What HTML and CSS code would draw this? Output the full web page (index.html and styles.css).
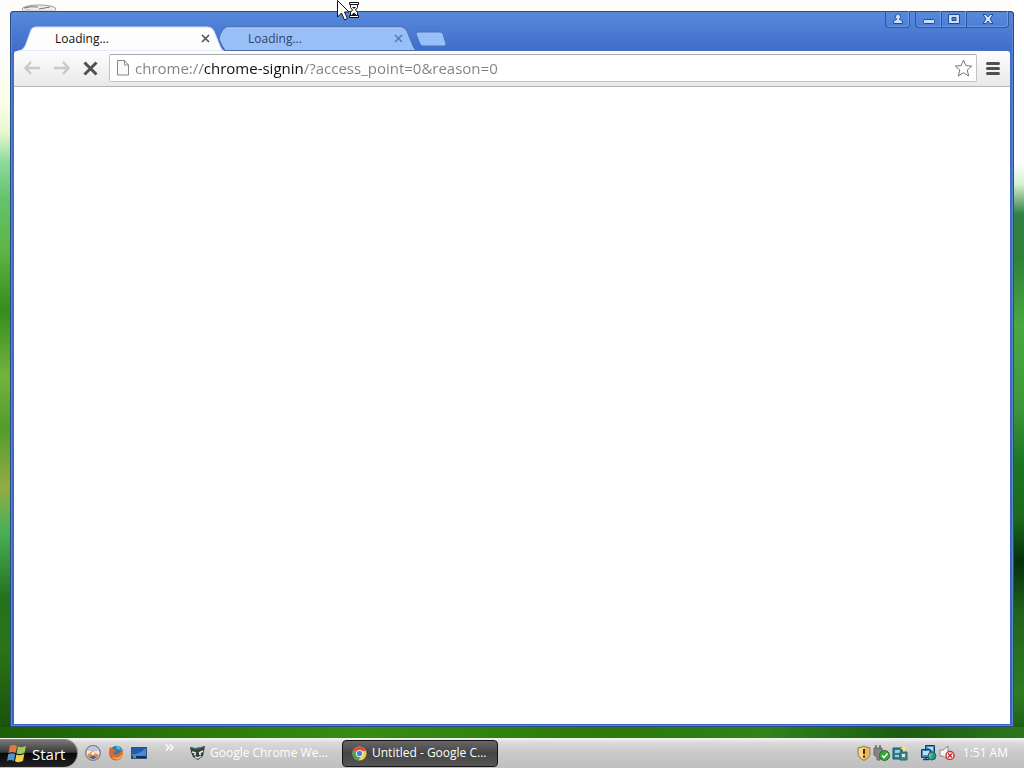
FILE: index.html
```html
<!DOCTYPE html>
<html lang="en">
<head>
<meta charset="utf-8">
<title>Loading...</title>
<link rel="stylesheet" href="styles.css">
</head>
<body>
<main class="desktop">
  <svg class="recycle-bin" width="36" height="14" viewBox="0 0 36 14" aria-hidden="true">
    <ellipse cx="18" cy="5" rx="17" ry="4" fill="#eee" stroke="#999"/>
    <path d="M3 4q8-2 14-1M18 5l11-2M5 6l14 1" stroke="#777" fill="none"/>
    <path d="M1 6l2 8h30l2-8" fill="#ddd"/>
  </svg>
  <section class="window">
    <header class="titlebar">
      <nav class="tabs">
        <button class="tab active" type="button">
          <svg class="tab-shape" viewBox="0 0 206 25" preserveAspectRatio="none" aria-hidden="true"><path d="M0 25C5 24 6 22 8 18L13 4Q14 1 18 1H190Q194 1 196 5L202 20Q204 25 206 25Z" fill="#fdfdfd" stroke="#c9d9f4"/></svg>
          <span class="tab-title">Loading...</span>
          <svg width="9" height="9" viewBox="0 0 9 9" aria-hidden="true"><path d="M1 1l7 7M8 1L1 8" stroke="#555" stroke-width="1.7"/></svg>
        </button>
        <button class="tab" type="button">
          <svg class="tab-shape" viewBox="0 0 206 25" preserveAspectRatio="none" aria-hidden="true"><path d="M14 24.500Q11 20 8 13Q9 8 11 5Q13 1 17 1H190Q194 1 196 5L202 20Q204 24.500 206 24.500Z" fill="#98bff8" stroke="#4b6ea9"/><path d="M15 2H191" stroke="#b7d2fb"/></svg>
          <span class="tab-title">Loading...</span>
          <svg width="9" height="9" viewBox="0 0 9 9" aria-hidden="true"><path d="M1 1l7 7M8 1L1 8" stroke="#607eaa" stroke-width="1.7"/></svg>
        </button>
        <button class="new-tab" type="button" aria-label="New tab">
          <svg width="32" height="16" viewBox="0 0 32 16" aria-hidden="true"><path d="M3 1H25Q27 1 28 3L31 13Q31 15 29 15H8Q6 15 5 13L1 3Q1 1 3 1Z" fill="#98bff8" stroke="#4b73b8"/></svg>
        </button>
      </nav>
      <div class="controls">
        <button class="control user" type="button" aria-label="User"><svg width="12" height="12" viewBox="0 0 12 12"><path d="M1.500 10.500V9Q1.500 7 4.500 6.500V6A2.700 2.700 0 1 1 7.500 6V6.500Q10.500 7 10.500 9V10.500Z" fill="#c9defd" stroke="#244a91"/></svg></button>
        <button class="control minimize" type="button" aria-label="Minimize"><svg width="14" height="12" viewBox="0 0 14 12"><rect x="1.500" y="6.500" width="11" height="4" rx="1" fill="#c9defd" stroke="#244a91"/></svg></button>
        <button class="control maximize" type="button" aria-label="Maximize"><svg width="12" height="12" viewBox="0 0 12 12"><path fill-rule="evenodd" d="M.5 1.500h11v9H.5ZM4 4.500v3h4v-3Z" fill="#c9defd" stroke="#244a91"/></svg></button>
        <button class="control close" type="button" aria-label="Close"><svg width="12" height="12" viewBox="0 0 12 12"><path d="M1 1.500h3l2 2.500 2-2.500h3L8 6l3 4.500H8L6 8l-2 2.500H1L4 6Z" fill="#d4e5ff" stroke="#244a91"/></svg></button>
      </div>
    </header>
    <div class="toolbar">
      <button class="tool" type="button" aria-label="Back"><svg width="17" height="14" viewBox="0 0 17 14"><path d="M16 7H2M7 1L1.500 7 7 13" fill="none" stroke="#c9c9c9" stroke-width="2.400"/></svg></button>
      <button class="tool" type="button" aria-label="Forward"><svg width="17" height="14" viewBox="0 0 17 14"><path d="M1 7h14M10 1l5.500 6L10 13" fill="none" stroke="#c9c9c9" stroke-width="2.400"/></svg></button>
      <button class="tool" type="button" aria-label="Stop"><svg width="15" height="15" viewBox="0 0 15 15"><path d="M1.500 1.500l12 12M13.500 1.500l-12 12" stroke="#505050" stroke-width="3"/></svg></button>
      <form class="omnibox">
        <svg width="12" height="16" viewBox="0 0 12 16" aria-hidden="true"><path d="M.5.5h7l4 4.500v10H.5ZM7.500.5V5h4" fill="#fafafa" stroke="#888"/></svg>
        <input class="url" type="text" aria-label="Address" value="chrome://chrome-signin/?access_point=0&amp;reason=0">
        <button class="star" type="button" aria-label="Bookmark"><svg width="19" height="18" viewBox="0 0 19 18"><path d="M9.500 1l2.300 5.600 6 .5-4.600 3.900 1.500 6-5.200-3.200L4.300 17l1.500-6L1.200 7.100l6-.5Z" fill="#fff" stroke="#777" stroke-linejoin="round"/></svg></button>
      </form>
      <button class="menu" type="button" aria-label="Menu"><svg width="14" height="13" viewBox="0 0 14 13"><path d="M1.500 1.500h11M1.500 6.500h11M1.500 11.500h11" stroke="#505050" stroke-width="3" stroke-linecap="round"/></svg></button>
    </div>
    <div class="page"></div>
  </section>
  <svg class="pointer" width="24" height="22" viewBox="0 0 24 22" aria-hidden="true">
    <path d="M1.500.5V17L5.500 13l3 7 3-1.500L8.500 12H13Z" fill="#fff" stroke="#111"/>
    <path d="M13.500 2.500h9v2h-1v3l-2 2.500 2 2.500v3h1v2h-9v-2h1v-3l2-2.500-2-2.500v-3h-1Z" fill="#fff" stroke="#111"/>
    <path d="M14 4.500h8M14 15.500h8" stroke="#111"/><path d="M16 7h4l-2 2ZM15.500 15l2.500-2.500 2.500 2.500Z" fill="#111"/>
  </svg>
</main>
<footer class="taskbar">
  <button class="start" type="button">
    <svg width="20" height="19" viewBox="0 0 20 19" aria-hidden="true">
      <path d="M3 2Q6 0 10 2L8.500 9Q5 7 1.500 9Z" fill="#e4793f"/><path d="M11 2.500Q15 4 19 2L17.500 9Q13 11 9.500 9.500Z" fill="#9ccb56"/>
      <path d="M1.300 10Q5 8.500 8.300 10L7 17Q3 15 0 17Z" fill="#4e96cf"/><path d="M9.300 10.500Q13 12 17.300 10L16 17Q12 19 8 17.500Z" fill="#f2ce4d"/>
    </svg>
    <span>Start</span>
  </button>
  <nav class="quick">
    <button type="button" aria-label="Browser"><svg width="16" height="16" viewBox="0 0 16 16"><circle cx="8" cy="8" r="7.300" fill="#e7e8ee" stroke="#6f7282" stroke-width="1.200"/><path d="M3 6a5 5 0 0 1 10 0" fill="#bcc6dd"/><path d="M2 10l3-2 3-3 2 3 4 2-2 3-4-2-4 2Z" fill="#e78b2d"/><path d="M6 9l2-3 2 3-2 1Z" fill="#fff"/><path d="M4 12.500l4-2 4 2-4 2Z" fill="#52618a"/></svg></button>
    <button type="button" aria-label="Firefox"><svg width="16" height="16" viewBox="0 0 16 16"><circle cx="8.500" cy="7" r="6.300" fill="#2b80ae"/><path d="M8 1q4 0 5 4l-4-1Z" fill="#65b7cd"/><path d="M2 2l3 2q2 0 3 2l-3 2q2 3 5 1 4-2 3-6 3 4 1.500 8Q12 16 7 15.500 1 14 1 8Q1 4 2 2Z" fill="#e1662a"/><path d="M14 5q1 5-3 7-4 2-7-1 2 4 6 3.500 6-2 4-9.500Z" fill="#f4b04a"/></svg></button>
    <button type="button" aria-label="Show desktop"><svg width="16" height="14" viewBox="0 0 16 14"><rect x=".5" y="1.500" width="15" height="11" fill="#2459ae" stroke="#374e75"/><path d="M1 8Q8 9 15 2v8H1Z" fill="#438bd5"/><path d="M1 11h14" stroke="#172e5b" stroke-width="2"/><path d="M2 11h3" stroke="#4da553" stroke-width="2"/></svg></button>
  </nav>
  <button class="more" type="button" aria-label="More shortcuts"><svg width="9" height="7" viewBox="0 0 9 7"><path d="M1 .5l3 3-3 3M5 .5l3 3-3 3" fill="none" stroke="#fff" stroke-width="1.500"/></svg></button>
  <div class="tasks">
    <button class="task" type="button">
      <svg width="15" height="14" viewBox="0 0 15 14" aria-hidden="true"><path d="M0 1l5 1 6-1 4-1-1 5-1 5-5 4-5-3-2-5Z" fill="#354139"/><path d="M1 1l4 2 8-2" stroke="#4c8b76" fill="none"/><path d="M2 6l4 1M13 5L9 7M5 11l3 1 3-2" stroke="#e6e8e6" stroke-width="1.500" fill="none"/><circle cx="5" cy="8.500" r="1" fill="#fff"/><circle cx="10" cy="8" r="1" fill="#fff"/></svg>
      <span>Google Chrome We...</span>
    </button>
    <button class="task current" type="button">
      <svg width="15" height="15" viewBox="0 0 16 16" aria-hidden="true"><circle cx="8" cy="8" r="7.500" fill="#f3cd43"/><path d="M1.500 4.200A7.500 7.500 0 0 1 15 5.200H8L5 9.500Z" fill="#dc4d41"/><path d="M1.500 4.200L5 10l4 1.300-2 4.100A7.500 7.500 0 0 1 1.500 4.200Z" fill="#3fa65a"/><circle cx="8" cy="8" r="3.800" fill="#fff"/><circle cx="8" cy="8" r="2.900" fill="#4286d8"/></svg>
      <span>Untitled - Google C...</span>
    </button>
  </div>
  <div class="tray">
    <svg width="14" height="16" viewBox="0 0 14 16" aria-hidden="true"><path d="M7 1Q10 3 13 2.500V8q0 5-6 7.500Q1 13 1 8V2.500Q4 3 7 1Z" fill="#f2b74a" stroke="#8e8370"/><path d="M7 2v12Q2 12 2 8V3Q5 4 7 2Z" fill="#f8d589"/><path d="M7 4v5M7 10.500v2" stroke="#3e2d16" stroke-width="2"/></svg>
    <svg width="17" height="16" viewBox="0 0 17 16" aria-hidden="true"><path d="M3 0v3M7 0v3" stroke="#666" stroke-width="1.500"/><path d="M1 3h8v7l-2 2v3H4v-3l-3-2Z" fill="#858585" stroke="#666"/><circle cx="11.500" cy="10.500" r="5" fill="#39a63c" stroke="#247027"/><path d="M9 10.500l2 2 3.500-4" fill="none" stroke="#fff" stroke-width="1.600"/></svg>
    <svg width="16" height="16" viewBox="0 0 16 16" aria-hidden="true"><path d="M1 3h9v11H1Z" fill="#287f91" stroke="#245766"/><path d="M3 5h5v3H3ZM3 10h4v2H3Z" fill="#93d2db"/><path d="M8 7h7v8H8Z" fill="#398c9d" stroke="#286475"/><path d="M10 9h3v3h-3Z" fill="#eee6cf"/><path d="M12 0l1 2.500 3 1-3 1L12 7l-1-2.500-3-1 3-1Z" fill="#f3e873"/></svg>
    <svg class="network" width="17" height="16" viewBox="0 0 17 16" aria-hidden="true"><path d="M5.500.5h9v8h-9ZM1.500 4.500h9v8h-9Z" fill="#438bc0" stroke="#193b5d"/><path d="M7 2h6v4M3 6h6v4H3Z" fill="#b9e1f2"/><path d="M3 14.500h6M6 12v2" stroke="#193b5d" stroke-width="1.500"/><circle cx="12" cy="11" r="4" fill="#269091" stroke="#256075"/><path d="M9 9l3-1 1 2-2 1 1 3-3-2Z" fill="#6dbf66"/></svg>
    <svg width="16" height="16" viewBox="0 0 16 16" aria-hidden="true"><path d="M1 5h3l5-4v14l-5-4H1Z" fill="#f4f4f4" stroke="#888"/><circle cx="11" cy="10.500" r="4" fill="#fff" stroke="#c73335" stroke-width="1.500"/><path d="M9 8.500l4 4m0-4l-4 4" stroke="#c73335" stroke-width="1.600"/></svg>
    <time class="clock">1:51 AM</time>
  </div>
</footer>
</body>
</html>
```
FILE: styles.css
```css
* { box-sizing: border-box; }
body {
  margin: 0;
  height: 100vh;
  display: flex;
  flex-direction: column;
  overflow: hidden;
  font: 12px/16px "Open Sans", "Noto Sans", sans-serif;
}
button {
  display: flex;
  align-items: center;
  margin: 0;
  padding: 0;
  border: 0;
  background: none;
  color: inherit;
  font: inherit;
}
svg { display: block; flex: none; }

.desktop {
  position: relative;
  flex: 1;
  display: flex;
  padding: 11px 10px;
  background:
    linear-gradient(90deg, #1c5f06, #2c7909 20%, #368d12 35%, #2c7909 60%, #2e831a 75%, #1c5c12 88%, #2d751d) bottom / 100% 11px no-repeat,
    linear-gradient(#fdfefc 0 7%, #fcfee8 14%, #e6f8d0 18%, #8ed99b 22%, #63c36b 27%, #5eb543 34%, #358d1c 42%, #72b43d 51%, #529c2b 58%, #93ac43 66%, #49b057 72%, #23721c 81%, #2b7417 88%, #184d08) left / 12px 100% no-repeat,
    linear-gradient(#fff 0 22%, #d4efd0 25%, #328044 29%, #2f8138 35%, #49a83f 44%, #3e973a 55%, #1a7421 63%, #1b6b1b 70%, #052f0b 76%, #216219 83%, #2e7c22 94%, #1a5512) right / 12px 100% no-repeat,
    #fdfefc;
}
.recycle-bin { position: absolute; left: 21px; top: 4px; }
.pointer { position: absolute; left: 336px; top: 0; }

.window {
  position: relative;
  flex: 1;
  display: flex;
  flex-direction: column;
  min-width: 0;
  padding: 0 4px 3px;
  border-radius: 4px 4px 0 0;
  background: linear-gradient(#578bdd, #426fca 36px, #3966bd);
  box-shadow: inset 0 0 0 1px #294c87, inset 0 0 0 2px #5d86ce;
}
.titlebar {
  display: flex;
  justify-content: space-between;
  height: 40px;
}
.tabs { display: flex; align-items: flex-end; min-width: 0; padding-left: 4px; }
.tab {
  position: relative;
  width: 206px;
  height: 25px;
  padding: 0 17px 0 37px;
  color: #304565;
}
.tab + .tab { margin-left: -13px; }
.tab.active { z-index: 1; color: #111; }
.tab-shape { position: absolute; inset: 0; width: 100%; height: 100%; }
.tab-title { position: relative; flex: 1; text-align: left; }
.tab > svg:last-child { position: relative; margin-right: -3px; }
.new-tab { align-self: flex-end; height: 24px; margin-left: -2px; }

.controls { display: flex; align-items: flex-start; padding-right: 1px; }
.control {
  justify-content: center;
  width: 25px;
  height: 17px;
  border: solid #2f579f;
  border-width: 0 1px 1px 0;
  box-shadow: inset -1px -1px #6c9be6;
}
.user { margin-right: 5px; border-left-width: 1px; border-radius: 0 0 4px 4px; }
.minimize { width: 27px; border-left-width: 1px; border-bottom-left-radius: 4px; }
.close { width: 42px; border-bottom-right-radius: 4px; }

.toolbar {
  display: flex;
  align-items: center;
  height: 36px;
  padding: 0 10px 1px 8px;
  border-bottom: 1px solid #b5b5b5;
  border-radius: 3px 3px 0 0;
  background: linear-gradient(#fdfdfd, #e9e9e9);
}
.tool { justify-content: center; width: 20px; height: 28px; margin-right: 9px; }
.omnibox {
  flex: 1;
  display: flex;
  align-items: center;
  height: 28px;
  min-width: 0;
  padding: 0 3px 0 7px;
  border: 1px solid #c2c2c2;
  border-top-color: #aaa;
  border-radius: 2px;
  background: #fff;
}
.url {
  flex: 1;
  min-width: 0;
  height: 24px;
  margin-left: 6px;
  padding: 0;
  border: 0;
  outline: 0;
  color: transparent;
  font: 15px/24px "Open Sans", "Noto Sans", sans-serif;
  background: linear-gradient(90deg, #808080 68px, #111 68px 169px, #808080 169px);
  background-clip: text;
  -webkit-background-clip: text;
}
.menu { margin-left: 9px; }
.page { flex: 1; background: #fff; }

.taskbar {
  display: flex;
  align-items: center;
  height: 30px;
  background: linear-gradient(#f4f4f4, #d9d9d9 5px, #c9c9c9 15px, #bfbfbf);
  color: #fff;
}
.start {
  gap: 5px;
  width: 78px;
  height: 28px;
  padding-left: 7px;
  border: solid #888;
  border-width: 1px 1px 0 0;
  border-radius: 0 14px 14px 0;
  background: linear-gradient(#777, #3b3b3b 45%, #080808 50%, #222);
  font-size: 15px;
}
.quick { display: flex; align-items: center; gap: 7px; margin-left: 7px; }
.more { align-self: flex-start; margin: 6px 16px 0 18px; }
.tasks { display: flex; gap: 2px; min-width: 0; }
.task {
  gap: 5px;
  width: 150px;
  height: 27px;
  white-space: nowrap;
}
.task.current {
  width: 156px;
  padding-left: 9px;
  border: 1px solid #161616;
  border-radius: 4px;
  background: linear-gradient(#666, #454545 50%, #555);
}
.tray { display: flex; align-items: center; gap: 2px; margin-left: auto; padding-right: 16px; }
.network { margin-left: 10px; }
.clock { margin-left: 6px; }
```
